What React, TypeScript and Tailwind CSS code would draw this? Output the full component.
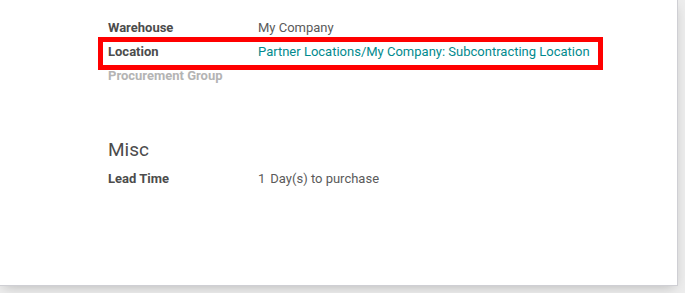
export default function App() {
  return (
    <div className="w-[685px] h-[293px] bg-[#ededed] overflow-hidden font-['Roboto',sans-serif] text-[13px] text-[#4c4c4c]">
      <div className="relative w-[678px] h-[286px] bg-white border-r border-b border-[#cfcfd4] shadow-[0_4px_12px_-4px_rgba(0,0,0,0.25)] pl-[108px] pt-[15.5px]">
        <div className="grid grid-cols-[150px_1fr] leading-[24px]">
          <div className="font-bold">Warehouse</div>
          <div className="text-[#5a5a5a]">My Company</div>
          <div className="font-bold">Location</div>
          <div className="text-[#018a8e]">Partner Locations/My Company: Subcontracting Location</div>
          <div className="font-bold text-[#b4b4b4]">Procurement Group</div>
          <div></div>
        </div>

        <h2 className="mt-[50.5px] text-[19px] leading-[24px] text-[#4c4c4c]">Misc</h2>

        <div className="mt-[5px] grid grid-cols-[150px_1fr] leading-[24px]">
          <div className="font-bold">Lead Time</div>
          <div className="text-[#5a5a5a]">
            <span>1</span>
            <span className="ml-[5px]">Day(s) to purchase</span>
          </div>
        </div>

        {/* highlight annotation */}
        <div className="absolute left-[98px] top-[37px] w-[505px] h-[33px] border-[5px] border-[#ff0000]" />
      </div>
    </div>
  );
}
